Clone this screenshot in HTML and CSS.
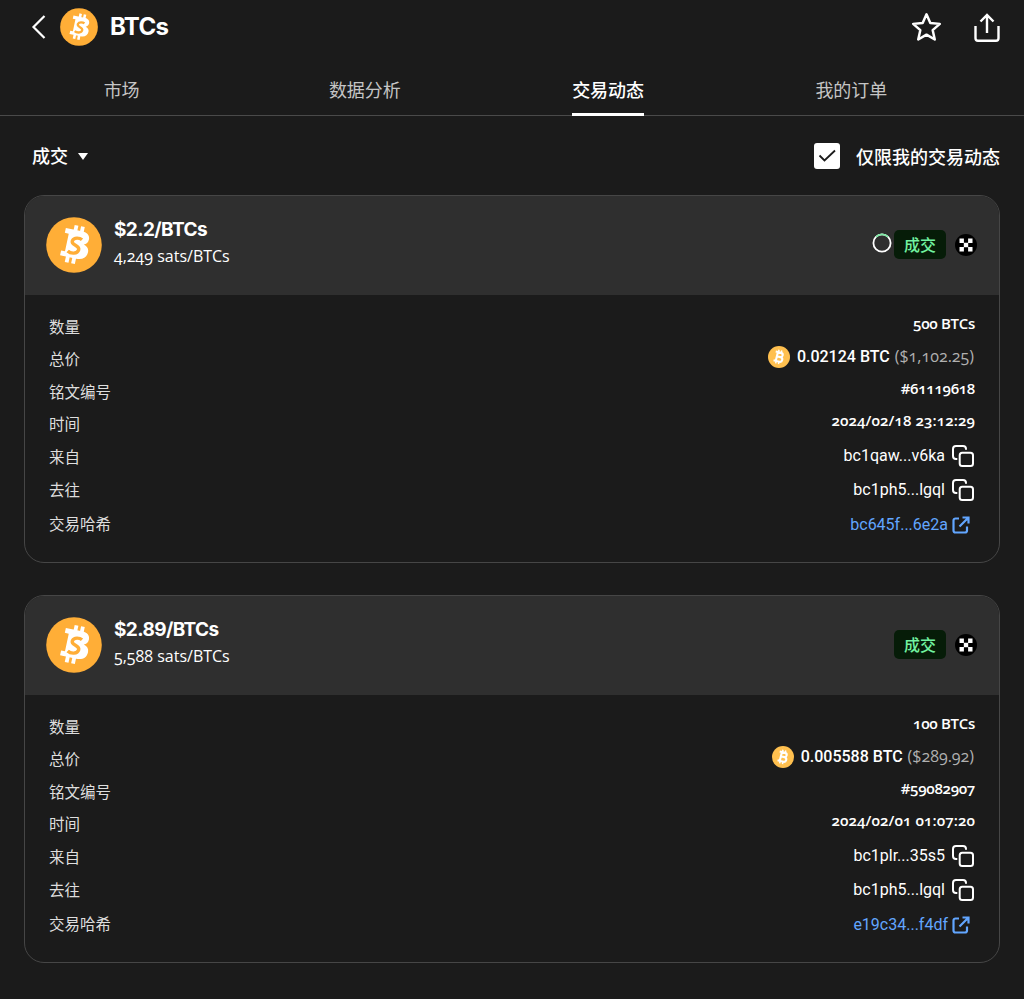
FILE: index.html
```
<!DOCTYPE html>
<html lang="zh-CN">
<head>
  <meta charset="UTF-8" />
  <meta name="viewport" content="width=device-width, initial-scale=1.0"/>
  <title>BTCs</title>
  <link rel="stylesheet" href="styles.css">
</head>
<body>

  <!-- Iconos compartidos -->
  <svg class="sprite" aria-hidden="true">
    <symbol id="coin-s" viewBox="0 0 56 56">
      <circle cx="28" cy="28" r="27.800" fill="#ffae37"/>
      <g transform="rotate(12 28 28)" fill="#fff">
        <path d="M16.500 13H33c5.500 0 8.500 2.600 8.500 6.600 0 3-1.500 4.900-4 5.900 3.800 1 5.700 3.300 5.700 6.600 0 5.700-4 8.900-10.200 8.900H16.500v-5h4V18h-4z"/>
        <path d="M24.500 8.200h3.800V14h-3.800zM31 8.200h3.800V14H31zM22.500 40h3.800v6.500h-3.800zM29 40h3.800v6.500H29z"/>
      </g>
      <path d="M36 22.800c-2.200-2-8-2.600-9.600.8-1.900 5 7.600 4.300 6.300 9.200-1.200 4.200-8 4.200-11 1.200" fill="none" stroke="#ffae37" stroke-width="3.400"/>
    </symbol>
    <symbol id="coin-btc" viewBox="0 0 22 22">
      <circle cx="11" cy="11" r="11" fill="#ffc04f"/>
      <g transform="rotate(14 11 11)" fill="none" stroke="#fff">
        <path d="M6.500 6.500h5.500a2.100 2.100 0 0 1 0 4.300H8.500h4a2.300 2.300 0 0 1 0 4.700h-6M8.800 6.500v9" stroke-width="2.100"/>
        <path d="M9.300 4v2.500M12.200 4v2.500M9.300 15.500V18M12.200 15.500V18" stroke-width="1.500"/>
      </g>
    </symbol>
    <symbol id="copy" viewBox="0 0 22 22">
      <path d="M5.300 14H4a3 3 0 0 1-3-3V4a3 3 0 0 1 3-3h7a3 3 0 0 1 3 3v.8" fill="none" stroke="#fff" stroke-width="2"/>
      <rect x="7.700" y="7.700" width="13.300" height="13.300" rx="2.500" fill="none" stroke="#fff" stroke-width="2"/>
    </symbol>
    <symbol id="link" viewBox="0 0 18 18">
      <path d="M7 2.500H3.500a2 2 0 0 0-2 2v10a2 2 0 0 0 2 2h9.500a2 2 0 0 0 2-2V10.500M10.500 1.500h6v6M16 2l-8.500 8.500" fill="none" stroke="#62a6ff" stroke-width="2.200"/>
    </symbol>
    <symbol id="okx" viewBox="0 0 22 22">
      <circle cx="11" cy="11" r="11" fill="#000"/>
      <path d="M4.500 4.500h4.400v4.400H4.500zM13.100 4.500h4.400v4.400h-4.400zM8.800 8.800h4.400v4.400H8.800zM4.500 13.100h4.400v4.400H4.500zM13.100 13.100h4.400v4.400h-4.400z" fill="#fff"/>
    </symbol>
  </svg>

  <header class="topbar">
    <svg class="back" viewBox="0 0 16 26"><path d="M13.500 2L2.500 13l11 11" fill="none" stroke="#fff" stroke-width="2.200"/></svg>
    <svg class="logo"><use href="#coin-s"/></svg>
    <h1>BTCs</h1>
    <svg class="star" viewBox="0 0 30 30"><path d="M15 2.200l3.700 8.400 9.200.9-6.900 6.100 2 9-8-4.700-8 4.700 2-9-6.900-6.100 9.200-.9z" fill="none" stroke="#fff" stroke-width="2.400" stroke-linejoin="round"/></svg>
    <svg class="share" viewBox="0 0 26 30"><path d="M1.500 13v12.300a2.500 2.500 0 0 0 2.500 2.500h18a2.500 2.500 0 0 0 2.500-2.500V13M13 20V2M6.500 8.500L13 2l6.500 6.500" fill="none" stroke="#fff" stroke-width="2.400"/></svg>
  </header>

  <nav class="tabs">
    <a>市场</a>
    <a>数据分析</a>
    <a class="active">交易动态</a>
    <a>我的订单</a>
  </nav>

  <div class="filters">
    <span class="select">成交</span>
    <svg class="caret" viewBox="0 0 10 7"><path d="M0 0h10L5 7z" fill="#fff"/></svg>
    <svg class="check" viewBox="0 0 26 26"><rect width="26" height="26" rx="3" fill="#fff"/><path d="M5.500 12.500l5 5L21 7.500" fill="none" stroke="#1b1b1b" stroke-width="1.800"/></svg>
    <span class="only-mine">仅限我的交易动态</span>
  </div>

  <main>
    <section class="card">
      <div class="card-head">
        <svg class="coin"><use href="#coin-s"/></svg>
        <div class="price">
          <h2>$2.2/BTCs</h2>
          <p class="hand sats">4,249 sats/BTCs</p>
        </div>
        <svg class="ring" viewBox="0 0 20 20"><circle cx="10" cy="10" r="8.600" fill="none" stroke="#fff" stroke-width="1.800"/><path d="M4 3.900a8.600 8.600 0 0 1 12 0" fill="none" stroke="#7eeaa5" stroke-width="1.800"/></svg>
        <span class="badge">成交</span>
        <svg class="okx"><use href="#okx"/></svg>
      </div>
      <dl>
        <div class="row qty"><dt>数量</dt><dd class="hand">500 BTCs</dd></div>
        <div class="row total"><dt>总价</dt><dd><svg class="btc"><use href="#coin-btc"/></svg><b>0.02124 BTC</b><span class="hand usd">($1,102.25)</span></dd></div>
        <div class="row number"><dt>铭文编号</dt><dd class="hand">#61119618</dd></div>
        <div class="row time"><dt>时间</dt><dd class="hand">2024/02/18 23:12:29</dd></div>
        <div class="row from"><dt>来自</dt><dd>bc1qaw...v6ka<svg class="copy"><use href="#copy"/></svg></dd></div>
        <div class="row to"><dt>去往</dt><dd>bc1ph5...lgql<svg class="copy"><use href="#copy"/></svg></dd></div>
        <div class="row hash"><dt>交易哈希</dt><dd>bc645f...6e2a<svg class="link"><use href="#link"/></svg></dd></div>
      </dl>
    </section>

    <section class="card">
      <div class="card-head">
        <svg class="coin"><use href="#coin-s"/></svg>
        <div class="price">
          <h2>$2.89/BTCs</h2>
          <p class="hand sats">5,588 sats/BTCs</p>
        </div>
        <span class="badge">成交</span>
        <svg class="okx"><use href="#okx"/></svg>
      </div>
      <dl>
        <div class="row qty"><dt>数量</dt><dd class="hand">100 BTCs</dd></div>
        <div class="row total"><dt>总价</dt><dd><svg class="btc"><use href="#coin-btc"/></svg><b>0.005588 BTC</b><span class="hand usd">($289.92)</span></dd></div>
        <div class="row number"><dt>铭文编号</dt><dd class="hand">#59082907</dd></div>
        <div class="row time"><dt>时间</dt><dd class="hand">2024/02/01 01:07:20</dd></div>
        <div class="row from"><dt>来自</dt><dd>bc1plr...35s5<svg class="copy"><use href="#copy"/></svg></dd></div>
        <div class="row to"><dt>去往</dt><dd>bc1ph5...lgql<svg class="copy"><use href="#copy"/></svg></dd></div>
        <div class="row hash"><dt>交易哈希</dt><dd>e19c34...f4df<svg class="link"><use href="#link"/></svg></dd></div>
      </dl>
    </section>
  </main>

</body>
</html>
```
FILE: styles.css
```
* {
  box-sizing: border-box;
}

body {
  margin: 0;
  min-height: 999px;
  background-color: #1b1b1b;
  color: #fff;
  font-family: Roboto, "Noto Sans CJK SC", sans-serif;
}

h1, h2, p, dl, dd {
  margin: 0;
}

svg {
  display: block;
  flex: none;
}

.sprite {
  position: absolute;
  width: 0;
  height: 0;
}

.topbar {
  display: flex;
  align-items: center;
  height: 54px;
  padding: 0 24px 0 31px;
}

.back {
  width: 16px;
  height: 26px;
}

.logo {
  width: 38px;
  height: 38px;
  margin: 0 12px 0 13px;
}

h1 {
  flex: 1;
  font-family: Inter, sans-serif;
  font-size: 24px;
  line-height: 30px;
  letter-spacing: -0.7px;
}

.star {
  width: 31px;
  height: 31px;
  margin-right: 32px;
  margin-top: 1px;
}

.share {
  width: 26px;
  height: 30px;
  margin-top: 2px;
}

/* Pestañas */
.tabs {
  display: grid;
  grid-template-columns: repeat(4, 1fr);
  justify-items: center;
  height: 62px;
  padding-right: 51px;
  border-bottom: 1px solid #4a4a4a;
}

.tabs a {
  height: 62px;
  padding-top: 23px;
  font-size: 18px;
  line-height: 28px;
  color: #c5c5c5;
}

.tabs .active {
  color: #fff;
  font-weight: 500;
  border-bottom: 3px solid #fff;
}

.filters {
  display: flex;
  align-items: center;
  height: 79px;
  padding: 2px 24px 0 32px;
  font-size: 18px;
  line-height: 28px;
  font-weight: 500;
}

.only-mine {
  padding-top: 2px;
}

.caret {
  width: 10px;
  height: 7px;
  margin-left: 10px;
}

.check {
  width: 26px;
  height: 26px;
  margin-left: auto;
  margin-right: 16px;
  margin-bottom: 2px;
}

/* Tarjetas */
main {
  padding: 0 24px;
}

.card {
  height: 368px;
  margin-bottom: 32px;
  border: 1px solid #464646;
  border-radius: 20px;
  overflow: hidden;
}

.card-head {
  display: flex;
  align-items: center;
  height: 99px;
  padding: 0 22px 0 21px;
  background-color: #2f2f2f;
}

.coin {
  width: 56px;
  height: 56px;
  margin-bottom: 1px;
}

.price {
  flex: 1;
  margin-left: 12px;
  padding-bottom: 4px;
}

h2 {
  font-family: Inter, sans-serif;
  font-size: 19px;
  line-height: 26px;
  letter-spacing: -0.6px;
}

.hand {
  font-family: "Open Sans", sans-serif;
  font-variant-numeric: oldstyle-nums;
  font-size: 15px;
  font-weight: 600;
  letter-spacing: -0.3px;
}

.sats {
  font-size: 16px;
  font-weight: 500;
  letter-spacing: 0;
  line-height: 27px;
}

.ring {
  width: 20px;
  height: 20px;
  margin-right: 2px;
  margin-bottom: 5px;
}

.badge {
  width: 52px;
  height: 29px;
  margin-bottom: 2px;
  border-radius: 5px;
  background-color: #061c08;
  color: #72f3a0;
  font-size: 16px;
  font-weight: 500;
  line-height: 32px;
  text-align: center;
}

.okx {
  width: 22px;
  height: 22px;
  margin-left: 9px;
  margin-bottom: 1px;
}

dl {
  padding: 16px 24px 0;
}

.row {
  display: flex;
  justify-content: space-between;
  align-items: center;
  height: 32px;
}

dt {
  padding-top: 1px;
  font-size: 15.5px;
  line-height: 24px;
  color: #dedede;
}

dd {
  display: flex;
  align-items: center;
  font-size: 16px;
  line-height: 24px;
}

.qty dd, .number dd, .time dd {
  padding-bottom: 9px;
}

.time dd {
  letter-spacing: 0.1px;
}

.total {
  height: 33px;
}

.total dd {
  padding-right: 1px;
  padding-bottom: 5px;
}

.total b {
  font-weight: 500;
}

.btc {
  width: 22px;
  height: 22px;
  margin-right: 7px;
}

.usd {
  margin-left: 5px;
  padding-bottom: 2px;
  font-size: 16px;
  font-weight: 500;
  letter-spacing: 0;
  color: #b0b0b0;
}

.from {
  height: 34px;
}

.from dd, .to dd {
  padding-right: 1px;
  padding-bottom: 2px;
}

.to dd {
  padding-bottom: 0;
}

.copy {
  width: 22px;
  height: 22px;
  margin-left: 7px;
}

.hash {
  height: 36px;
}

.hash dd {
  color: #62a6ff;
  padding-top: 2px;
  padding-right: 5px;
}

.link {
  width: 18px;
  height: 18px;
  margin-left: 4px;
}
```
